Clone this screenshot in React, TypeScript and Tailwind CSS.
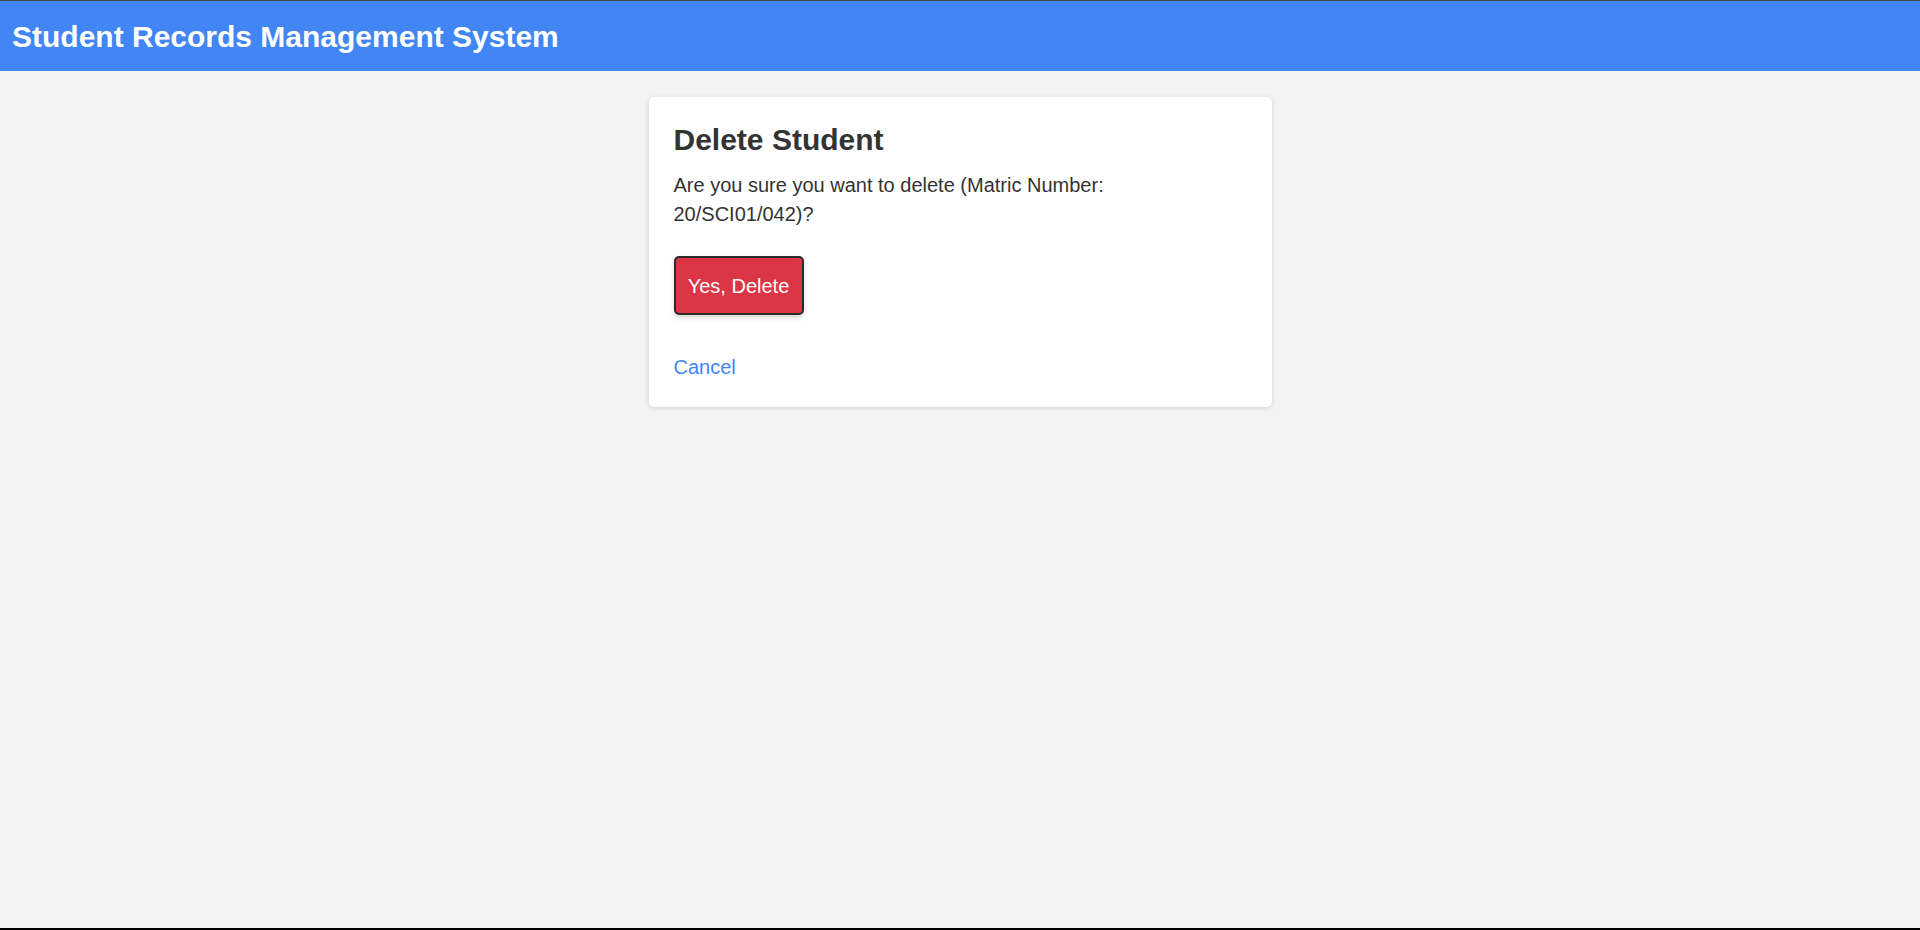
import React from "react";

const DeleteStudent: React.FC = () => {
    const matric = "20/SCI01/042";

    return (
        <div className="h-[930px] flex flex-col bg-[#f3f3f3] border-t border-[#4a4a4a] border-b-2 border-b-black font-['Liberation_Sans',Arial,sans-serif] text-[#333]">
            {/* Header */}
            <header className="h-[70px] shrink-0 flex items-center px-[12px] bg-[#4285f4]">
                <h1 className="text-[30px] font-bold text-white leading-normal">
                    Student Records Management System
                </h1>
            </header>

            {/* Card */}
            <div className="w-[623px] mx-auto mt-[26px] bg-white rounded-[5px] p-[25px] shadow-[0_1px_5px_rgba(0,0,0,0.15)]">
                <h2 className="text-[30px] font-bold leading-[36px] text-[#333]">Delete Student</h2>
                <p className="mt-[13px] text-[20px] leading-[29px] text-[#333]">
                    Are you sure you want to delete (Matric Number:
                    <br />
                    {matric})?
                </p>

                <form onSubmit={(e) => e.preventDefault()}>
                    <button
                        type="submit"
                        className="mt-[27px] h-[59px] w-[130px] flex items-center justify-center bg-[#dc3545] text-white text-[20px] leading-normal border-2 border-[#2b2b2b] rounded-[5px] shadow-[0_3px_5px_rgba(0,0,0,0.15)]"
                    >
                        Yes, Delete
                    </button>
                </form>

                <a href="#" className="block mt-[38px] text-[20px] leading-[29px] text-[#4285f4] w-fit">
                    Cancel
                </a>
            </div>
        </div>
    );
};

export default function App() {
    return <DeleteStudent />;
}
